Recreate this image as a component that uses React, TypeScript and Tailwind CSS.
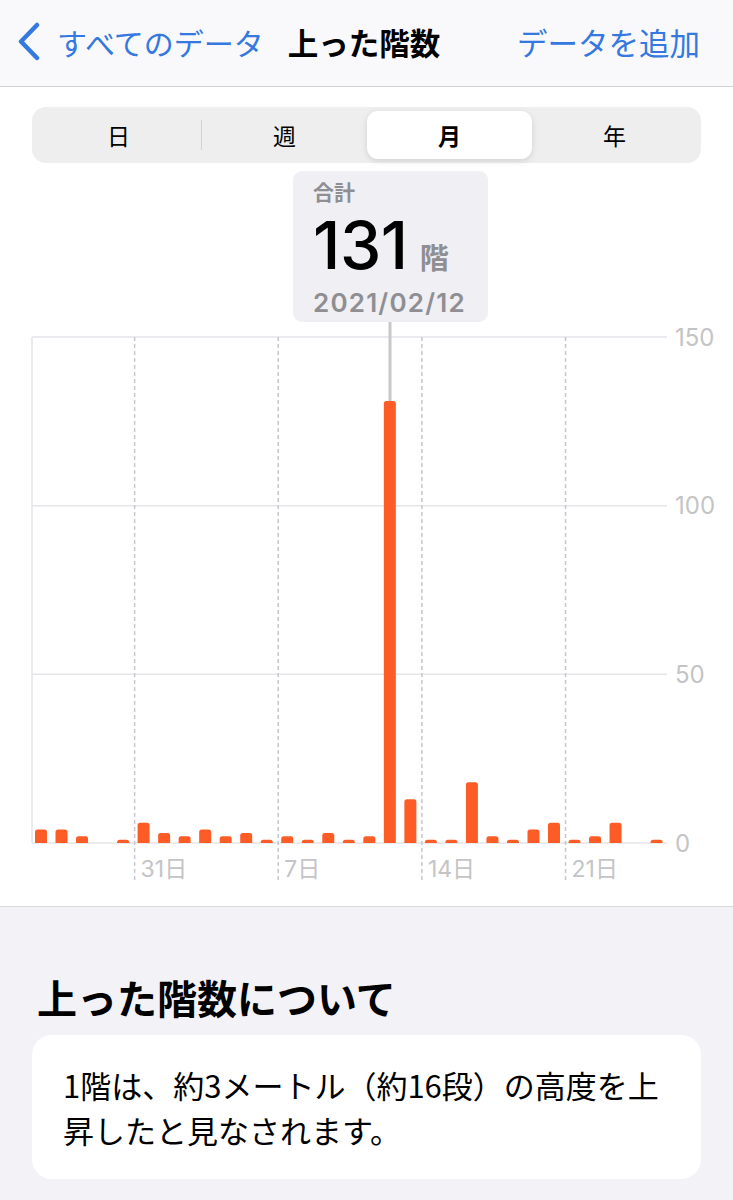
import React from 'react';

const values = [4, 4, 2, 0, 1, 6, 3, 2, 4, 2, 3, 1, 2, 1, 3, 1, 2, 131, 13, 1, 1, 18, 2, 1, 4, 6, 1, 2, 6, 0, 1];

const TOP = 15;
const BASE = 521;
const SCALE = (BASE - TOP) / 150;
const SLOT = 20.52;

const barPath = (x: number, h: number, w = 12, r = 2.5) => {
  const y = BASE - h;
  return `M${x} ${BASE} V${y + r} Q${x} ${y} ${x + r} ${y} H${x + w - r} Q${x + w} ${y} ${x + w} ${y + r} V${BASE} Z`;
};

const Chart = () => {
  const grid = [150, 100, 50, 0];
  const ticks = [
    { slot: 5, label: '31日' },
    { slot: 12, label: '7日' },
    { slot: 19, label: '14日' },
    { slot: 26, label: '21日' },
  ];
  return (
    <svg width="733" height="584" viewBox="0 0 733 584" className="block">
      {grid.map(g => (
        <line key={g} x1="32" x2="667" y1={BASE - g * SCALE} y2={BASE - g * SCALE} stroke="#e5e5ea" strokeWidth="1.5" />
      ))}
      <line x1="32" x2="32" y1={TOP} y2={BASE} stroke="#e5e5ea" strokeWidth="1.5" />
      {ticks.map(t => {
        const x = 32 + t.slot * SLOT;
        return (
          <g key={t.label}>
            <line x1={x} x2={x} y1={TOP} y2="558" stroke="#c7c7cc" strokeWidth="1.5" strokeDasharray="4 3" />
            <text x={x + 6} y="549" dominantBaseline="middle" fontSize="23" fill="#c4c4c6" fontFamily="Inter, 'Noto Sans CJK JP', sans-serif">
              {t.label}
            </text>
          </g>
        );
      })}
      {grid.map(g => (
        <text key={g} x="675" y={BASE - g * SCALE + 2} dominantBaseline="middle" fontSize="24" fill="#c4c4c6" fontFamily="Inter, sans-serif">
          {g}
        </text>
      ))}
      <line x1="390" x2="390" y1="0" y2={BASE - 131 * SCALE} stroke="#c7c7cc" strokeWidth="3" />
      {values.map((v, i) =>
        v > 0 ? <path key={i} d={barPath(35 + i * SLOT, v * SCALE)} fill="#fd5c26" /> : null
      )}
    </svg>
  );
};

const segments = ['日', '週', '月', '年'];

export default function App() {
  return (
    <div className="w-[733px] h-[1200px] overflow-hidden bg-[#f2f2f7] font-['Noto_Sans_CJK_JP',sans-serif]">
      <header className="h-[87px] bg-[#f9f9fb] border-b border-[#d1d1d6] flex items-center">
        <svg width="26" height="40" viewBox="0 0 26 40" className="ml-[15px] mb-[3px]">
          <path d="M22 3 L6 19.5 L22 36" fill="none" stroke="#3478e0" strokeWidth="4.5" strokeLinecap="round" strokeLinejoin="round" />
        </svg>
        <span className="ml-[16px] mb-[2px] text-[30px] text-[#3478e0] leading-none">すべてのデータ</span>
        <span className="ml-[24px] mb-[2px] text-[30.5px] font-bold text-black leading-none">上った階数</span>
        <span className="ml-auto mr-[33px] mb-[2px] text-[30.5px] text-[#3478e0] leading-none">データを追加</span>
      </header>

      <section className="bg-white border-b border-[#dadade]">
        <div className="pt-[20px] px-[32px]">
          <div className="h-[56px] bg-[#eeeeef] rounded-[14px] p-[4px] flex items-center">
            {segments.map((s, i) => (
              <React.Fragment key={s}>
                {i === 1 && <div className="w-px h-[30px] bg-[#d1d1d6]" />}
                <div
                  className={
                    s === '月'
                      ? 'flex-1 h-full rounded-[11px] bg-white shadow-[0_2px_6px_rgba(0,0,0,0.12)] flex items-center justify-center text-[23px] font-semibold text-black'
                      : 'flex-1 h-full flex items-center justify-center text-[23px] text-black'
                  }
                >
                  {s}
                </div>
              </React.Fragment>
            ))}
          </div>
        </div>

        <div className="mt-[8px] ml-[293px] w-[195px] h-[151px] bg-[#efeff4] rounded-[9px] px-[20px] pt-[10px]">
          <div className="text-[21px] font-semibold text-[#8e8e93] leading-[20px]">合計</div>
          <div className="flex items-baseline h-[64px] leading-none mt-[11px]">
            <span className="font-['Inter',sans-serif] text-[66px] font-medium text-black tracking-[-0.5px] leading-none">131</span>
            <span className="ml-[12px] text-[29px] font-semibold text-[#8e8e93] leading-none">階</span>
          </div>
          <div className="mt-[14px] font-['Inter',sans-serif] text-[26px] font-semibold text-[#8e8e93] leading-none tracking-[1.2px]">2021/02/12</div>
        </div>

        <Chart />
      </section>

      <section className="px-[32px]">
        <h2 className="pt-[66px] pl-[5px] text-[40px] font-bold text-black leading-[48px]">上った階数について</h2>
        <div className="mt-[14px] bg-white rounded-[20px] px-[31px] pt-[27px] pb-[27px] text-[31px] leading-[45px] text-black">
          1階は、約3メートル（約16段）の高度を上昇したと見なされます。
        </div>
      </section>
    </div>
  );
}
